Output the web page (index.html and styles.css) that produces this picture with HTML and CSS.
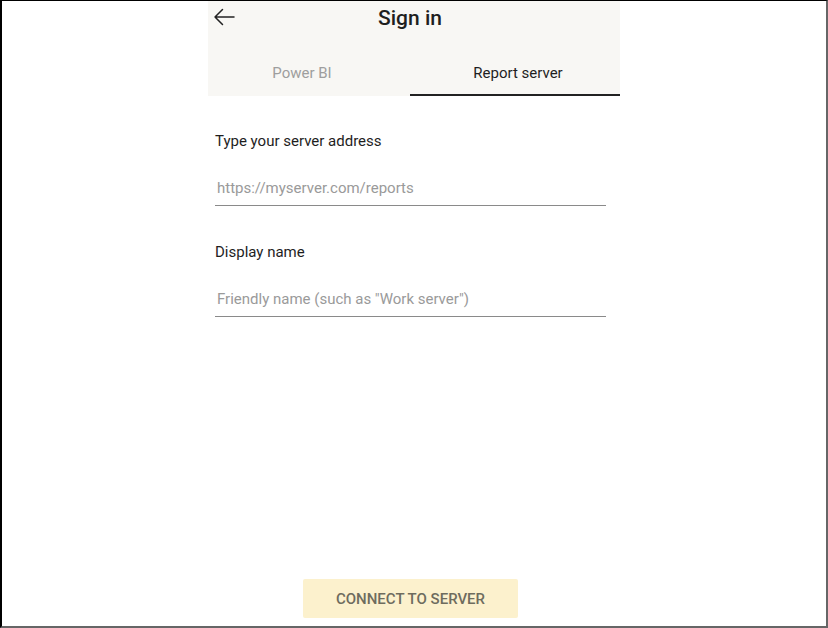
FILE: index.html
```html
<!DOCTYPE html>
<html>
<head>
<meta charset="utf-8">
<link rel="stylesheet" href="styles.css">
</head>
<body>
<div class="frame">
  <div class="phone">
    <div class="header">
      <div class="topbar">
        <svg class="back" width="22" height="18" viewBox="0 0 22 18" fill="none" stroke="#222" stroke-width="1.5" stroke-linecap="round" stroke-linejoin="round">
          <path d="M21 9H2M9.5 1.5L2 9l7.5 7.5"/>
        </svg>
        <div class="title">Sign in</div>
      </div>
      <div class="tabs">
        <div class="tab tab-inactive">Power BI</div>
        <div class="tab tab-active">Report server</div>
      </div>
    </div>
    <div class="form">
      <div class="label">Type your server address</div>
      <div class="input">https://myserver.com/reports</div>
      <div class="label label-next">Display name</div>
      <div class="input">Friendly name (such as "Work server")</div>
    </div>
    <div class="button">CONNECT TO SERVER</div>
  </div>
</div>
</body>
</html>
```
FILE: styles.css
```css
html, body {
  margin: 0;
  padding: 0;
  background: #fff;
}
.frame {
  box-sizing: border-box;
  width: 828px;
  height: 628px;
  border-top: 1px solid #000;
  border-left: 2px solid #000;
  border-right: 2px solid #666;
  border-bottom: 2px solid #666;
  font-family: Roboto, "Liberation Sans", sans-serif;
  overflow: hidden;
}
.phone {
  margin-left: 206px;
  width: 412px;
  height: 100%;
  display: flex;
  flex-direction: column;
}
.header {
  background: #f8f7f4;
  height: 95px;
  display: flex;
  flex-direction: column;
}
.topbar {
  position: relative;
  height: 35px;
  display: flex;
  align-items: center;
  justify-content: center;
  padding-right: 8px;
}
.back {
  position: absolute;
  left: 5px;
  top: 7px;
}
.title {
  font-size: 21px;
  font-weight: 500;
  color: #1f1f1f;
  line-height: 24px;
  margin-top: -2px;
}
.tabs {
  flex: 1;
  display: flex;
}
.tab {
  display: flex;
  align-items: center;
  justify-content: center;
  font-size: 15px;
  padding-top: 13px;
  box-sizing: border-box;
}
.tab-inactive {
  width: 188px;
  margin-right: 14px;
  color: #9e9e9e;
}
.tab-active {
  flex: 1;
  color: #1f1f1f;
  border-bottom: 2px solid #222;
  padding-top: 15px;
  padding-left: 6px;
}
.form {
  padding: 0 14px 0 7px;
}
.label {
  margin-top: 35px;
  font-size: 15px;
  line-height: 20px;
  color: #1e1e1e;
}
.label-next {
  margin-top: 36px;
}
.input {
  margin-top: 18px;
  padding: 9px 2px 7px;
  font-size: 15px;
  line-height: 20px;
  color: #9a9a9a;
  border-bottom: 1px solid #8a8a8a;
}
.button {
  margin-top: auto;
  margin-bottom: 8px;
  margin-left: 95px;
  align-self: flex-start;
  width: 215px;
  height: 39px;
  background: #fcf1cd;
  color: #6e6c5e;
  font-size: 15px;
  font-weight: 500;
  display: flex;
  align-items: center;
  justify-content: center;
  border-radius: 2px;
}
```
